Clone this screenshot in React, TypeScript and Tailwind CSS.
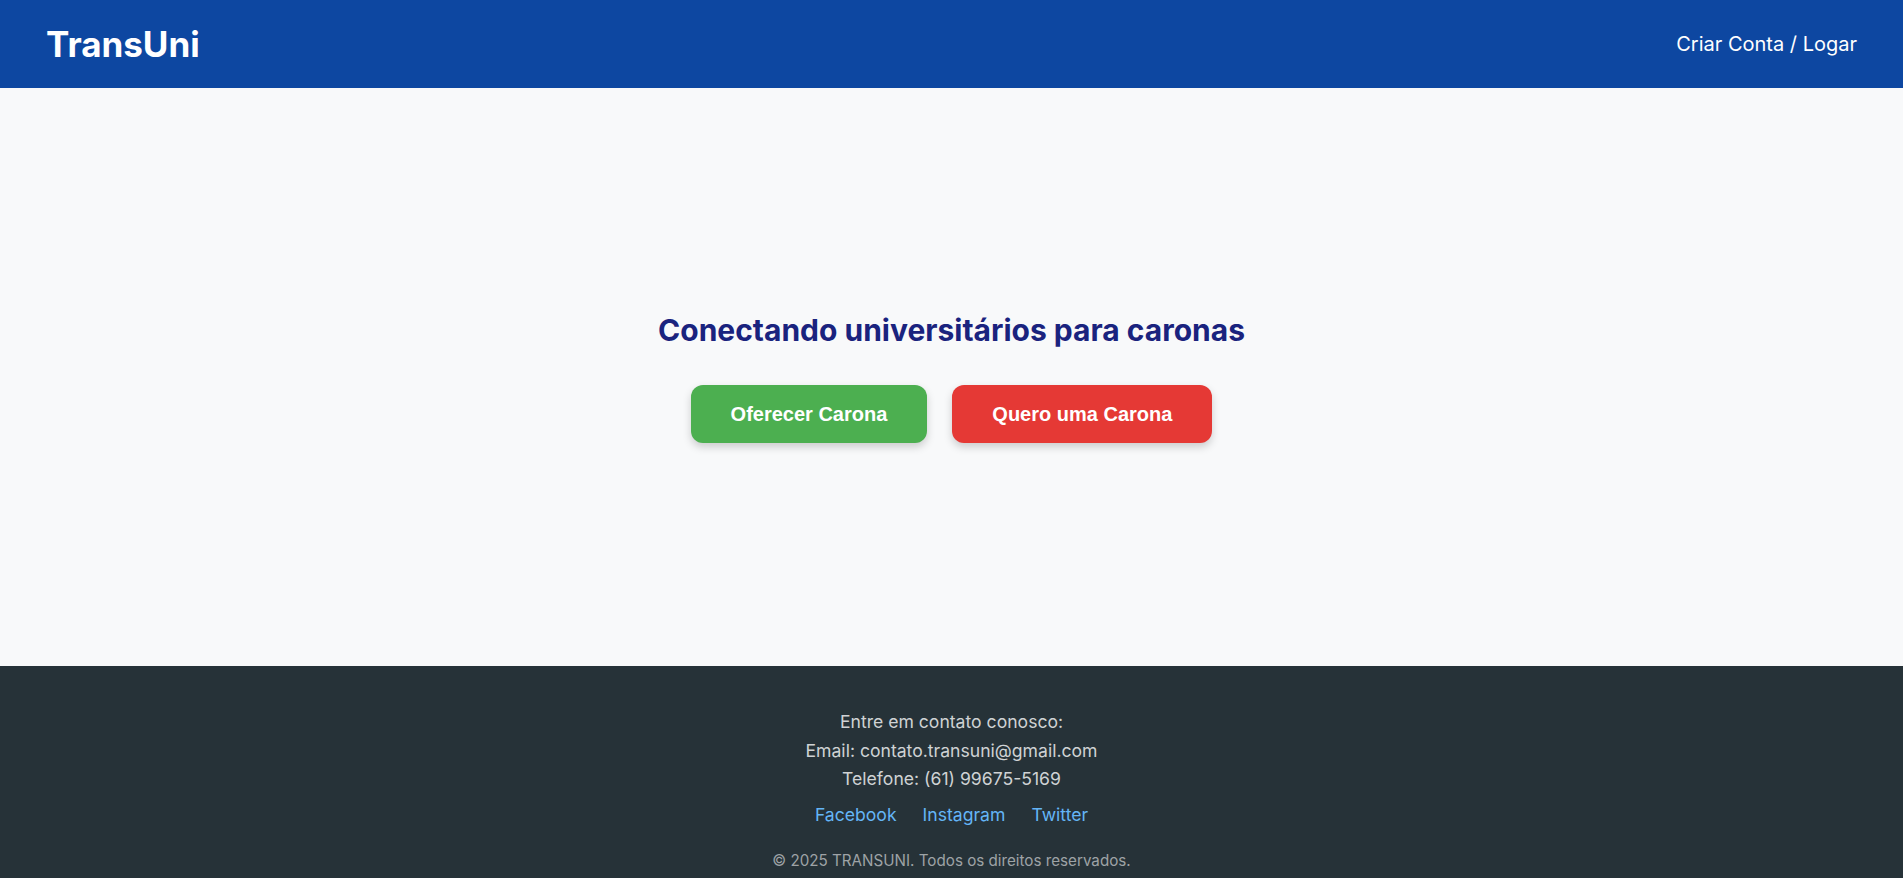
import React from "react";

const inter = { fontFamily: "Inter, 'Noto Sans', sans-serif" };

function Header() {
  return (
    <header className="flex h-[88px] items-center justify-between bg-[#0d47a1] px-[46px] text-white shadow-md">
      <h1 className="text-[35px] font-bold leading-none">TransUni</h1>
      <a href="#" className="text-[20px] leading-none text-white">
        Criar Conta / Logar
      </a>
    </header>
  );
}

function Hero() {
  return (
    <main className="flex h-[578px] flex-col items-center justify-center bg-[#f8f9fa]">
      <h2 className="mb-[37px] text-[30px] font-bold leading-[36px] text-[#1a237e]">
        Conectando universitários para caronas
      </h2>
      <div className="flex gap-[25px] font-['Liberation_Sans',Arial,sans-serif]">
        <button className="rounded-[12px] bg-[#4caf50] px-10 py-[17px] text-[20px] font-bold leading-[24px] text-white shadow-[0_4px_8px_rgba(0,0,0,0.18)]">
          Oferecer Carona
        </button>
        <button className="rounded-[12px] bg-[#e53935] px-10 py-[17px] text-[20px] font-bold leading-[24px] text-white shadow-[0_4px_8px_rgba(0,0,0,0.18)]">
          Quero uma Carona
        </button>
      </div>
    </main>
  );
}

function Footer() {
  return (
    <footer className="flex flex-col items-center bg-[#263238] pb-8 pt-[42px] text-center">
      <p className="text-[17.6px] leading-[28.5px] text-[#cfd2d4]">Entre em contato conosco:</p>
      <p className="text-[17.6px] leading-[28.5px] text-[#cfd2d4]">Email: contato.transuni@gmail.com</p>
      <p className="text-[17.6px] leading-[28.5px] text-[#cfd2d4]">Telefone: (61) 99675-5169</p>
      <div className="mt-[7px] flex gap-[26px] text-[17.6px] leading-[28.5px] text-[#64b5f6]">
        <a href="#">Facebook</a>
        <a href="#">Instagram</a>
        <a href="#">Twitter</a>
      </div>
      <p className="mt-5 text-[15.2px] leading-[24px] text-[#9ea3a6]">
        © 2025 TRANSUNI. Todos os direitos reservados.
      </p>
    </footer>
  );
}

export default function App() {
  return (
    <div style={inter} className="min-h-screen">
      <Header />
      <Hero />
      <Footer />
    </div>
  );
}
